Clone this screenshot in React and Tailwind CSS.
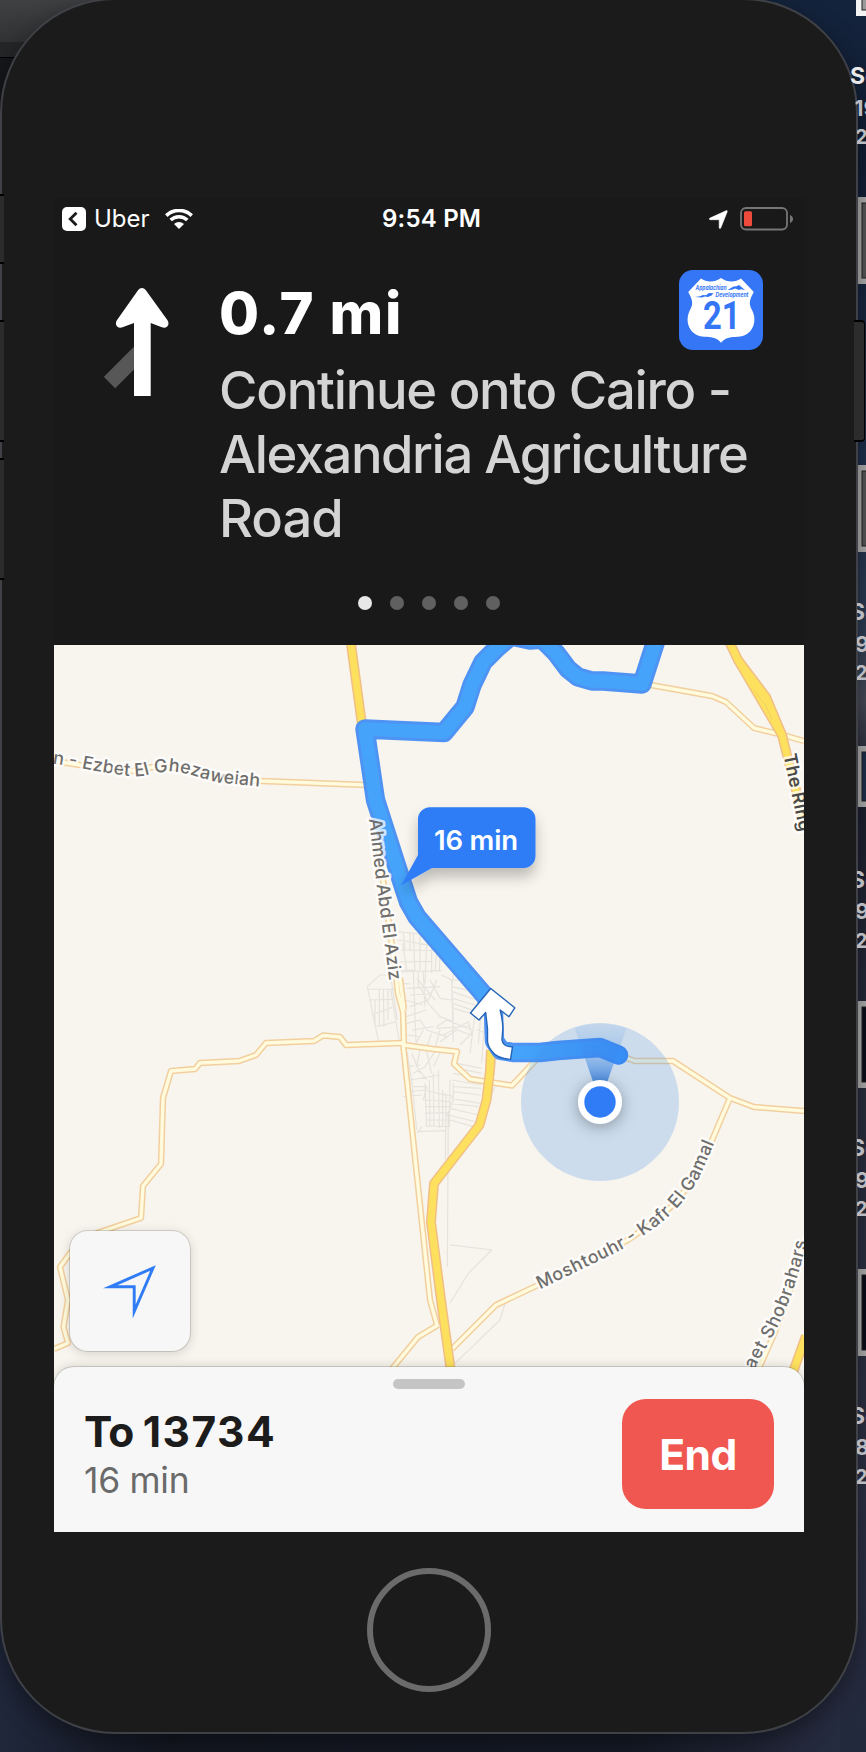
import React from "react";

const FONT = "font-['Inter','Liberation_Sans',sans-serif]";

/* ---------- Desktop behind the phone ---------- */

const DESKTOP_FILES = [
  { frame: [0, 16], label: [84, 116, 144], text: ["So", "19", "2"], inner: "#9a9a9a", bright: true },
  { frame: [197, 284], label: [620, 652, 680], text: ["So", "9", "2"], inner: "#555555" },
  { frame: [465, 552], label: [888, 919, 948], text: ["So", "9", "2"], inner: "#555555" },
  { frame: [746, 807], label: [1156, 1188, 1216], text: ["So", "9", "2"], inner: "#1d2f4c" },
  { frame: [1001, 1088], label: [1424, 1455, 1484], text: ["So", "8", "2"], inner: "#0b0e1a" },
  { frame: [1269, 1356], label: [], text: [], inner: "#0a0d18" },
];

function Desktop() {
  return (
    <svg className="absolute inset-0 h-full w-full" viewBox="0 0 866 1752" aria-hidden="true">
      <defs>
        <linearGradient id="sky" x1="0" y1="0" x2="0" y2="1">
          <stop offset="0" stopColor="#14233c" />
          <stop offset="0.09" stopColor="#111d33" />
          <stop offset="0.24" stopColor="#1b2c49" />
          <stop offset="0.36" stopColor="#2c3b52" />
          <stop offset="0.4" stopColor="#454956" />
          <stop offset="0.45" stopColor="#1b1f2d" />
          <stop offset="0.62" stopColor="#292d3c" />
          <stop offset="0.85" stopColor="#2b3044" />
          <stop offset="1" stopColor="#23293c" />
        </linearGradient>
        <linearGradient id="bar" x1="0" y1="0" x2="0.3" y2="1">
          <stop offset="0" stopColor="#404143" />
          <stop offset="1" stopColor="#303133" />
        </linearGradient>
        <linearGradient id="floor" x1="0" y1="0" x2="1" y2="0">
          <stop offset="0" stopColor="#1f273a" />
          <stop offset="0.2" stopColor="#141722" />
          <stop offset="0.75" stopColor="#161a26" />
          <stop offset="1" stopColor="#262c40" />
        </linearGradient>
      </defs>
      <rect width="866" height="1752" fill="url(#sky)" />
      <rect y="1600" width="840" height="152" fill="url(#floor)" />
      <rect width="300" height="820" fill="#15171a" />
      <rect width="200" height="42" fill="url(#bar)" />
      <rect y="42" width="60" height="15" fill="#252628" />
      <rect y="57" width="60" height="1" fill="#000" />
      {DESKTOP_FILES.map((f) => (
        <g key={f.frame[0]}>
          <rect x="856" y={f.frame[0]} width="20" height={f.frame[1] - f.frame[0]} fill={f.bright ? "#f2f2f2" : "#adadad"} />
          <rect x="862" y={f.bright ? -6 : f.frame[0] + 6} width="10" height={f.bright ? 16 : f.frame[1] - f.frame[0] - 12} fill={f.inner} stroke="#222" strokeWidth="1" />
        </g>
      ))}
    </svg>
  );
}

/* File names that hang over the phone's right edge. */
function DesktopLabels() {
  return (
    <svg className="absolute inset-0 h-full w-full" viewBox="0 0 866 1752" aria-hidden="true">
      <defs>
        <clipPath id="besidePhone">
          <path d="M846 0H866V1752H857V110L846 60Z" />
        </clipPath>
      </defs>
      <g clipPath="url(#besidePhone)">
        {DESKTOP_FILES.map((f) =>
          f.label.map((y, i) => (
            <text key={y} x={i === 0 ? 850 : f.bright && i === 1 ? 854 : 855} y={y} className={FONT} fontSize={i === 0 ? 23 : i === 1 ? 22 : 20} fontWeight="700" fill={f.bright && i === 0 ? "#e8e8e8" : "#b9bbc0"}>
              {f.text[i]}
            </text>
          )),
        )}
      </g>
    </svg>
  );
}

/* ---------- Status bar ---------- */

function StatusBar() {
  return (
    <div className="flex h-[42px] items-center pr-[10px] pl-2 text-white">
      <svg className="size-6" viewBox="0 0 24 24">
        <rect width="24" height="24" rx="5" fill="#fff" />
        <path d="M14.5 5.8 8.2 12l6.3 6.2" fill="none" stroke="#1a1a1a" strokeWidth="2.8" />
      </svg>
      <span className="ml-2 w-[55px] text-[24px] leading-[42px]">Uber</span>
      <svg className="ml-4 h-5 w-7" viewBox="0 0 28 20">
        <path d="M1.3 6.6a18.2 18.2 0 0 1 25.4 0" fill="none" stroke="#fff" strokeWidth="3.6" />
        <path d="M5.7 11.1a11.8 11.8 0 0 1 16.6 0" fill="none" stroke="#fff" strokeWidth="3.5" />
        <path d="M14 20 9 14.9a7.2 7.2 0 0 1 10 0Z" fill="#fff" />
      </svg>
      <span className="ml-[189px] w-[102px] text-[24px] leading-[42px] font-semibold tracking-[0.2px] whitespace-nowrap">9:54 PM</span>
      <svg className="ml-auto size-[19px]" viewBox="0 0 19 19">
        <path d="M1 8.1 17.1.7c.8-.3 1.4.2 1.1 1L11.7 18c-.4.8-1.4.7-1.5-.2V9.7H1.2C.1 9.6 0 8.6 1 8.1Z" fill="#fff" stroke="#fff" strokeWidth="0.6" />
      </svg>
      <svg className="ml-3 h-6 w-[54px]" viewBox="0 0 54 24">
        <rect x="1" y="1" width="46" height="21.500" rx="5" fill="none" stroke="#767676" strokeWidth="1.800" />
        <rect x="4" y="4.200" width="8" height="15" rx="1.500" fill="#ef4b3c" />
        <path d="M50 8c4 1.500 4 6.500 0 8Z" fill="#767676" />
      </svg>
    </div>
  );
}

/* ---------- Maneuver banner ---------- */

function ManeuverIcon() {
  return (
    <svg className="h-[110px] w-[66px]" viewBox="0 0 66 110">
      <path d="m5.500 95.500 31-31" stroke="#575757" strokeWidth="16" />
      <path d="M30 109V36l-11.500 4.300c-4.800 1.600-8.400-2.500-5.600-7L34.200 3c2.100-2.800 5.400-2.800 7.500 0l21.800 30.300c2.800 4.500-.8 8.600-5.600 7L46.700 36v73Z" fill="#fff" />
    </svg>
  );
}

function RouteShield() {
  return (
    <svg className="h-20 w-[84px]" viewBox="0 0 84 80">
      <rect width="84" height="80" rx="14" fill="#3476f6" />
      <path d="M22 8.500c5.500 4 13.500 4.200 20-.5 6.500 4.700 14.500 4.500 20 .5l12.800 13.500c-6.300 10.500-3.800 14-1.300 19 3.300 7 2.300 15-2.500 20.500C65 68 57 66.500 52 67.200c-4.500.6-7.500 2.300-10 5.600-2.500-3.300-5.500-5-10-5.600-5-.7-13 .8-19-5.700C8.200 56 7.200 48 10.500 41c2.500-5 5-8.500-1.300-19Z" fill="#fff" />
      <text x="16.500" y="19.600" textLength="31" lengthAdjust="spacingAndGlyphs" className={FONT} fontSize="6.400" fontWeight="700" fontStyle="italic" fill="#3476f6">Appalachian</text>
      <text x="36.500" y="27.200" textLength="33" lengthAdjust="spacingAndGlyphs" className={FONT} fontSize="6.400" fontWeight="700" fontStyle="italic" fill="#3476f6">Development</text>
      <path d="m48.500 20 6-3.500 3-.2 2.500-1.300 3 2.500 3 2.500-4-.8-2 .8-4-1.500-3 1.300ZM16 27l5-.8 3-1.200 3 .3 3-2.300 4.500.2-2 2.300-3.500 1.500-3-.4-3 .8Z" fill="#3476f6" />
      <text x="24" y="58.800" textLength="37.500" lengthAdjust="spacingAndGlyphs" className="font-['Roboto','Liberation_Sans',sans-serif]" fontSize="39.500" fontWeight="700" fill="#3476f6">21</text>
    </svg>
  );
}

function Banner() {
  return (
    <div className="flex h-[405px] flex-col text-white">
      <div className="flex h-[324px] pt-[30px]">
        <div className="ml-[50px] w-[66px] pt-[17px]">
          <ManeuverIcon />
        </div>
        <div className="ml-[49px] flex-1">
          <div className="flex h-[88px] justify-between pr-[41px]">
            <div className="pt-2 text-[58px] leading-[70px] font-extrabold tracking-[1.7px] whitespace-nowrap">0.7 mi</div>
            <RouteShield />
          </div>
          <p className="text-[52.500px] leading-[64.200px] font-medium whitespace-nowrap text-[#d4d4d4]">
            <span className="tracking-[-1.25px]">Continue onto Cairo -</span><br />
            <span className="tracking-[-1.45px]">Alexandria Agriculture</span><br />
            <span className="tracking-[-1px]">Road</span>
          </p>
        </div>
      </div>
      <div className="mx-auto mt-[32px] flex gap-[18px]">
        <span className="size-3.5 rounded-full bg-[#e8e8e8]" />
        <span className="size-3.5 rounded-full bg-[#606060]" />
        <span className="size-3.5 rounded-full bg-[#606060]" />
        <span className="size-3.5 rounded-full bg-[#606060]" />
        <span className="size-3.5 rounded-full bg-[#606060]" />
      </div>
    </div>
  );
}

/* ---------- Map ---------- */

const LIGHT_ROADS = [
  "M645 684 712 696 726 702 754 728 783 735 804 741",
  "M54 761 80 765 133 771 153 767 177 768 213 778 262 781 366 785",
  "M372 800 396 975 398 994 403 1012 404 1045 433 1049 457 1051.500 454 1064 470 1079 512 1085.500 536 1060 545 1052",
  "M400 978 404 1010",
  "M54 1349 68 1343 63.500 1327 68 1300 60 1267 71 1252 97 1233 141 1218 143 1186 161 1164 163 1098 171 1071 195 1069 200 1063 239 1061 256 1055 266 1043 314 1041 323 1035.500 340 1037 346 1045 403 1043 430 1300 437 1325",
  "M391 1370 418 1337 433 1328 438 1325",
  "M618 1055 635 1061 673 1061 730 1098 754 1107 804 1111",
  "M730 1098 713 1138 706 1155 690 1184 673 1205 650 1225 626 1241 583 1263 536 1286 496 1305 452 1349",
  "M756 1375 775 1332 792 1285 804 1240",
];

const YELLOW_ROADS = [
  "M350.500 640 362 725",
  "M727 637 738 660 782 735 787 755 796 790 805 828",
  "M738 660 766 697 782 735",
  "M491 1050 490 1070 486.500 1100 479.500 1125 434 1183.500 431 1222 441 1300 451 1372",
  "M806 1336 792 1375",
];

/* Village streets, drawn on a grid three times finer than the map. */
const STREETS =
  "M22 200 60 165 110 165 M22 200 40 290 56 365 M22 207 110 208 M30 240 100 238 M34 285 96 262 M50 320 105 306 M45 240 45 320 M58 208 58 318 M70 208 72 320 M84 210 84 300 M92 208 118 365 M92 170 112 300 " +
  "M112 35 180 42 M115 60 240 80 M115 90 245 92 M120 126 215 124 M110 150 160 150 M118 155 245 152 M130 40 135 90 M150 40 150 92 M128 70 140 150 M160 42 165 155 M180 42 180 150 M200 70 195 190 M215 75 215 160 M232 85 225 150 M240 92 238 155 M225 60 290 120 M290 100 275 200 M160 150 168 365 M175 155 175 205 M190 155 195 260 M130 190 150 192 M140 205 240 200 M150 225 210 222 M135 240 190 255 M150 260 205 240 M138 290 200 270 M140 310 180 300 200 330 260 350 M180 200 205 250 240 290 280 305 M210 180 240 235 275 240 M245 165 275 180 280 365 M170 175 225 240 M230 180 205 240 M275 180 280 300 M275 200 345 215 M277 215 350 240 M278 235 355 258 M279 250 350 275 M280 180 300 180 M282 265 330 280 M230 320 260 300 335 330 M230 325 330 318 M250 345 325 305 M240 365 290 330 335 345 M325 305 335 340 300 375 M190 330 165 375 M215 340 200 380 M240 330 225 385 M155 330 220 320 M140 345 180 350 M345 280 330 400 M365 260 355 370 M375 290 365 430 M350 330 380 340 " +
  "M140 390 155 480 170 630 M155 400 180 460 M180 390 170 440 200 480 M200 395 215 460 M225 395 195 440 160 460 M240 400 220 440 M145 440 180 435 M150 480 240 465 M160 500 200 500 190 540 M195 490 200 620 M208 480 210 620 M220 460 222 620 M235 450 238 625 M248 510 248 620 M258 520 256 720 M270 480 268 620 M190 510 280 530 M190 540 270 545 M195 560 270 560 M195 580 268 578 M200 600 265 600 M195 618 265 620 M172 635 255 632 M185 620 172 640 M265 580 262 1040 M290 430 365 445 M292 445 365 460 M280 460 360 475 M275 480 365 495 M280 500 365 505 M280 515 362 525 M275 535 360 550 M270 550 355 560 M270 565 355 585 M265 585 345 605 M270 600 340 620 M280 490 280 540 260 590 M130 530 185 525 M150 515 190 510 M405 500 380 560 M410 400 400 470 " +
  "M270 975 395 990 325 1060 270 1150 M435 1150 420 1200 275 1340";

function Label({ id, d, length, weight = 500, color = "#6e6e6e", size = 18, children }) {
  return (
    <>
      <path id={id} d={d} fill="none" />
      <text className={FONT} fontSize={size} fontWeight={weight} fill={color} stroke="#ffffff" strokeOpacity="0.75" strokeWidth="5" strokeLinejoin="round" paintOrder="stroke">
        <textPath href={"#" + id} textLength={length} lengthAdjust="spacing">{children}</textPath>
      </text>
    </>
  );
}

function MapCanvas() {
  const route =
    "M660 628 654.500 645 642 684 603 681 592 681 578 677 568 669 556 653 542 639 530 640 511 636 498 647 483 662 472 685 465 707 444 732.500 365 729 375.500 800 397 867 408.500 902 417 917 485 996 493.500 1013 494.500 1041 501 1050.500 513 1052.500 540 1052.500 558 1050.500 600 1047.500 618.500 1055";
  return (
    <svg className="absolute inset-0 h-full w-full" viewBox="54 645 750 887">
      <defs>
        <linearGradient id="beam" x1="0" y1="1" x2="0" y2="0">
          <stop offset="0.25" stopColor="#2f7be0" stopOpacity="0.8" />
          <stop offset="0.65" stopColor="#4c90e4" stopOpacity="0.3" />
          <stop offset="1" stopColor="#5c9ae6" stopOpacity="0.08" />
        </linearGradient>
        <linearGradient id="routeEnd" gradientUnits="userSpaceOnUse" x1="515" y1="0" x2="625" y2="0">
          <stop offset="0" stopColor="#2f82f5" stopOpacity="0" />
          <stop offset="0.8" stopColor="#2f82f5" stopOpacity="0.5" />
          <stop offset="1" stopColor="#2f82f5" stopOpacity="0.6" />
        </linearGradient>
        <filter id="shade" x="-50%" y="-50%" width="200%" height="200%">
          <feDropShadow dx="0" dy="9" stdDeviation="7" floodColor="#000" floodOpacity="0.24" />
        </filter>
        <filter id="dotShade" x="-60%" y="-60%" width="220%" height="220%">
          <feDropShadow dx="0" dy="3" stdDeviation="8" floodColor="#000" floodOpacity="0.32" />
        </filter>
      </defs>
      <rect x="54" y="645" width="750" height="887" fill="#f8f5ee" />
      <path d={STREETS} transform="translate(360 920) scale(0.3333)" fill="none" stroke="#e6e3dd" strokeWidth="3.600" />
      <g fill="none" strokeLinejoin="round">
        {LIGHT_ROADS.map((d) => <path key={d} d={d} stroke="#f2cf9f" strokeWidth="6.400" />)}
        {LIGHT_ROADS.map((d) => <path key={d} d={d} stroke="#fffbdc" strokeWidth="3.400" />)}
        {YELLOW_ROADS.map((d) => <path key={d} d={d} stroke="#f1bf85" strokeWidth="10" />)}
        {YELLOW_ROADS.map((d) => <path key={d} d={d} stroke="#fde15e" strokeWidth="7" />)}
        <path d="M738 660 766 703" stroke="#fde15e" strokeWidth="7" />
        <path d="M754 690 766 706 772 720" stroke="#f3cf62" strokeWidth="1" />
      </g>
      <g fill="none" strokeLinejoin="round" strokeLinecap="round">
        <path d={route} stroke="#4e93f3" strokeWidth="19.400" />
        <path d={route} stroke="#45a4fa" strokeWidth="13.500" />
      </g>

      <Label id="ezbet" d="M52.500 763.500 58 764.300 82 768.300Q110 773.500 126 775.700 139 777 148 774.700 160 771.500 173 771.500 187 773 198 777L218 782.500 270 787.500" length="210">n - Ezbet El Ghezaweiah</Label>
      <Label id="ahmed" d="M369 819 377 888 392 1000" length="163">Ahmed Abd El Aziz</Label>
      <Label id="ring" d="M783.500 755 792.500 798 799.500 832 806 860" length="79" weight="600" color="#4a4a4a">The Ring</Label>
      <Label id="gamal" d="M540 1289.500 583 1268.500Q609 1256.500 627 1246.500 650 1232 665 1219.500 684 1203 698 1180 709 1157 724 1119" length="236">Moshtouhr - Kafr El Gamal</Label>
      <Label id="shob" d="M754 1370 759 1360 775 1332Q785 1312 791 1296 799 1272 805 1249L812 1210" length="146">aet Shobrahars,</Label>

      <circle cx="600" cy="1102" r="79" fill="#4894e9" fillOpacity="0.25" />
      <path d="M600 1102 574.500 1028a79 79 0 0 1 52 0Z" fill="url(#beam)" />
      <path d="M513 1052.500 540 1052.500 558 1050.500 600 1047.500 618.500 1055" fill="none" stroke="url(#routeEnd)" strokeWidth="19" strokeLinecap="round" strokeLinejoin="round" />
      <circle cx="600" cy="1102" r="22" fill="#fff" filter="url(#dotShade)" />
      <circle cx="600" cy="1102" r="15.700" fill="#2f7cf6" />

      <path d="M490.700 988.500 514.800 1007.800 509 1016.700 500.200 1010Q503 1022 502.800 1029L502 1040Q503 1047 512.500 1046.800L510.500 1059.400Q497 1058.500 492.500 1052 487.500 1046 487.500 1041V1029L485.700 1012.500 479 1020 470.500 1013Z" fill="#fff" stroke="#2463b8" strokeWidth="1.400" strokeLinejoin="round" />

      <g filter="url(#shade)">
        <path d="M430 807.300H523.500a12 12 0 0 1 12 12V856a12 12 0 0 1-12 12H432L401 885.500 418 855V819.300a12 12 0 0 1 12-12Z" fill="#2f7cf6" />
      </g>
      <text x="434" y="849.600" textLength="84" className={FONT} fontSize="27.500" fontWeight="600" fill="#fff">16 min</text>
    </svg>
  );
}

function FollowButton() {
  return (
    <button className="relative mb-4 ml-4 flex size-[120px] items-center justify-center rounded-[18px] bg-[#f7f7f7] shadow-[0_0_0_1px_rgba(0,0,0,0.13),0_2px_12px_rgba(0,0,0,0.16)]" aria-label="Follow">
      <svg className="size-[120px]" viewBox="70 1231 120 120">
        <path d="M110 1286.800 153 1268 134.200 1311.500V1286.800Z" fill="none" stroke="#2f7cf6" strokeWidth="2.900" strokeMiterlimit="12" />
      </svg>
    </button>
  );
}

function TripSheet() {
  return (
    <div className="relative h-[165px] rounded-t-[20px] bg-[#f7f7f7] shadow-[0_0_0_1px_rgba(0,0,0,0.14),0_-2px_10px_rgba(0,0,0,0.12)]">
      <div className="flex h-8 justify-center pt-3">
        <span className="h-2.5 w-[72px] rounded-full bg-[#c5c5c5]" />
      </div>
      <div className="flex justify-between pr-[30px] pl-[30px]">
        <div>
          <div className="mt-2 text-[42.500px] leading-[50px] font-bold tracking-[1.5px] whitespace-nowrap text-[#1c1c1c]">
            <span className="tracking-[-0.8px]">To </span>13734
          </div>
          <div className="mt-0.5 text-[35.500px] leading-[44px] tracking-[-0.3px] text-[#6a6a6a]">16 min</div>
        </div>
        <button className="h-[110px] w-[152px] rounded-[24px] bg-[#ef5750] pt-0.5 text-[42.500px] font-bold tracking-[-0.5px] text-white">End</button>
      </div>
    </div>
  );
}

function PhoneScreen() {
  return (
    <div className="mt-[198px] ml-[52px] flex h-[1334px] w-[750px] flex-col overflow-hidden bg-[#191919]">
      <StatusBar />
      <Banner />
      <div className="relative flex flex-1 flex-col justify-end overflow-hidden">
        <MapCanvas />
        <FollowButton />
        <TripSheet />
      </div>
    </div>
  );
}

export default function App() {
  return (
    <main className={"relative h-[1752px] w-[866px] overflow-hidden bg-[#1b2233] " + FONT}>
      <Desktop />
      <div className="absolute -top-[2px] left-0 h-[1736px] w-[858px] rounded-[115px] border-2 border-[#3f4146] bg-[#1b1b1b] shadow-[0_8px_24px_rgba(0,0,0,0.4)]">
        <div className="flex flex-col">
          <PhoneScreen />
          <div className="mt-9 ml-[365px] size-[124px] rounded-full border-6 border-[#6b6b6b]" />
        </div>
      </div>
      <DesktopLabels />
      <div className="absolute top-[194px] left-0 h-[70px] w-1 border-y-2 border-black bg-[#2b2b2b]" />
      <div className="absolute top-[320px] left-0 h-[122px] w-1 border-y-2 border-black bg-[#2b2b2b]" />
      <div className="absolute top-[458px] left-0 h-[122px] w-1 border-y-2 border-black bg-[#2b2b2b]" />
      <div className="absolute top-[320px] left-[854px] h-[122px] w-[11px] rounded-r-[4px] border-y-2 border-r border-black bg-[#2c2c2c]" />
    </main>
  );
}
